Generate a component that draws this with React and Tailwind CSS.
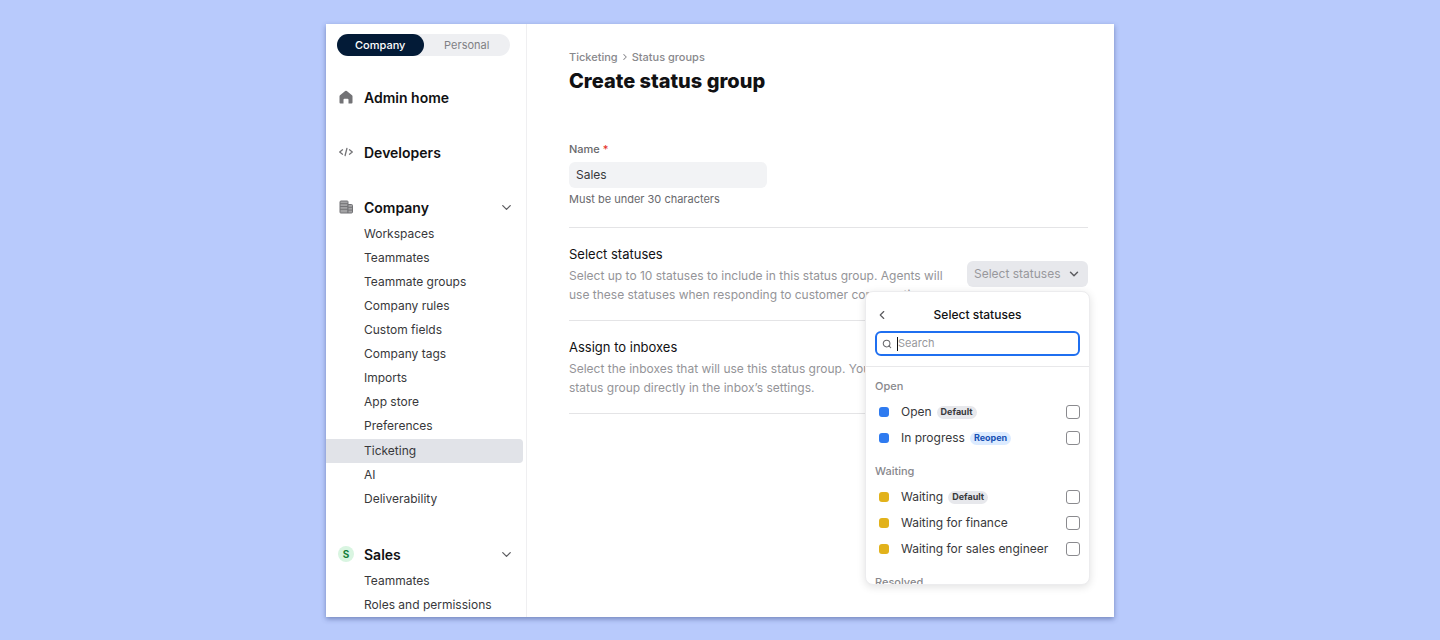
import { useState } from "react";
import { ChevronDown, ChevronLeft, ChevronRight, Search } from "lucide-react";
import clsx from "clsx";

const COMPANY_LINKS = [
  "Workspaces",
  "Teammates",
  "Teammate groups",
  "Company rules",
  "Custom fields",
  "Company tags",
  "Imports",
  "App store",
  "Preferences",
  "Ticketing",
  "AI",
  "Deliverability",
];

const SALES_LINKS = ["Teammates", "Roles and permissions"];

const STATUS_GROUPS = [
  {
    label: "Open",
    color: "bg-[#2f7bf0]",
    items: [
      { name: "Open", badge: "Default" },
      { name: "In progress", badge: "Reopen" },
    ],
  },
  {
    label: "Waiting",
    color: "bg-[#e2b21b]",
    items: [
      { name: "Waiting", badge: "Default" },
      { name: "Waiting for finance" },
      { name: "Waiting for sales engineer" },
    ],
  },
  { label: "Resolved", color: "bg-[#2f9e5b]", items: [] },
];

function HomeIcon() {
  return (
    <svg viewBox="0 0 14 14" className="size-[14px]" fill="#737376" aria-hidden="true">
      <path d="M6.2 1 1 5.2Q.5 5.6.5 6.3v6.2q0 1 1 1h3V9.8a1 1 0 0 1 1-1h3a1 1 0 0 1 1 1v3.7h3q1 0 1-1V6.3q0-.7-.5-1.1L7.8 1Q7 .4 6.2 1Z" />
    </svg>
  );
}

function CodeIcon() {
  return (
    <svg viewBox="0 0 16 12" className="h-3 w-4" fill="none" stroke="#737376" strokeWidth="1.3" strokeLinecap="round" strokeLinejoin="round" aria-hidden="true">
      <path d="M4.5 3.8 1.7 6l2.800 2.200M11.500 3.800 14.300 6l-2.800 2.200M8.900 2.500 7.100 9.500" />
    </svg>
  );
}

function BuildingIcon() {
  return (
    <svg viewBox="0 0 14 14" className="size-[14px]" aria-hidden="true">
      <path d="M2 1h6.300q.7 0 .7.7V13H1.700Q1 13 1 12.300V2q0-1 1-1Z" fill="#a3a3a5" stroke="#737376" />
      <path d="M9 4.500h3.500q1 0 1 1v6.500q0 1-1 1H9Z" fill="#a3a3a5" stroke="#737376" />
      <path d="M1 3.700h8M1 6.500h8M1 9.300h8M9 7.300h4.500M9 10.100h4.500" stroke="#737376" />
    </svg>
  );
}

function NavHeading({ icon, children, expandable }) {
  const inner = (
    <>
      <span className="flex w-4 shrink-0 justify-center">{icon}</span>
      <span className="flex-1 text-left">{children}</span>
      {expandable && <ChevronDown size={15} strokeWidth={2} className="text-[#5c5c60]" aria-hidden="true" />}
    </>
  );
  const cls = "flex h-6 w-full items-center gap-[10px] pl-3 pr-3 text-[14px] font-semibold text-[#111113]";
  return expandable ? (
    <button type="button" aria-expanded="true" className={cls}>{inner}</button>
  ) : (
    <a href="#" className={cls}>{inner}</a>
  );
}

function NavList({ links, active }) {
  return (
    <ul className="mt-[3px]">
      {links.map((link) => (
        <li key={link} className={clsx("mr-[3px]", link === active && "mt-px rounded-r bg-[#e1e3e8]")}>
          <a
            href="#"
            aria-current={link === active ? "page" : undefined}
            className="flex h-6 items-center pl-[38px] text-[12px] text-[#38383b]"
          >
            {link}
          </a>
        </li>
      ))}
    </ul>
  );
}

function Sidebar() {
  return (
    <aside className="w-[201px] shrink-0 border-r border-[#efeff1] pt-[10px]">
      <div className="ml-[11px] mr-4 flex h-[22px] rounded-full bg-[#eeeff2] text-[11px]">
        <button type="button" className="flex-1 rounded-full bg-[#031b37] font-medium text-white">Company</button>
        <button type="button" className="flex-1 text-[#808084]">Personal</button>
      </div>
      <nav className="mt-[29px] flex flex-col gap-[31px]">
        <NavHeading icon={<HomeIcon />}>Admin home</NavHeading>
        <NavHeading icon={<CodeIcon />}>Developers</NavHeading>
        <div>
          <NavHeading icon={<BuildingIcon />} expandable>Company</NavHeading>
          <NavList links={COMPANY_LINKS} active="Ticketing" />
        </div>
        <div>
          <NavHeading
            expandable
            icon={
              <span className="flex size-4 items-center justify-center rounded-full bg-[#d9f5e1] text-[10px] font-bold text-[#13803a]">S</span>
            }
          >
            Sales
          </NavHeading>
          <NavList links={SALES_LINKS} />
        </div>
      </nav>
    </aside>
  );
}

function Badge({ children }) {
  return (
    <span
      className={clsx(
        "flex h-[13px] items-center rounded-full px-1 text-[9px] font-bold",
        children === "Reopen" ? "bg-[#dcebff] text-[#1650b5]" : "bg-[#e7e8ec] text-[#38383b]"
      )}
    >
      {children}
    </span>
  );
}

function StatusMenu() {
  return (
    <div className="absolute -right-0.5 top-full z-10 mt-1 h-[294px] w-[225px] overflow-hidden rounded-lg border border-[#ececee] bg-white shadow-[0_2px_8px_rgba(0,0,0,0.12)]">
      <div className="border-b border-[#e8e8ea] px-[9px] pb-[10px] pt-[11px]">
        <div className="flex h-6 items-center">
          <button type="button" aria-label="Back" className="w-4 text-[#5c5c60]">
            <ChevronLeft size={14} strokeWidth={2} />
          </button>
          <h3 className="flex-1 pr-4 text-center text-[12px] font-medium text-[#111113]">Select statuses</h3>
        </div>
        <label className="mt-1 flex h-[25px] items-center rounded-md border-2 border-[#1f6ff0] pl-[5px] text-[11px]">
          <Search size={10} strokeWidth={2.5} className="text-[#68686c]" aria-hidden="true" />
          <span className="ml-[5px] h-[14px] w-px bg-[#111113]" />
          <input
            type="text"
            aria-label="Search statuses"
            placeholder="Search"
            className="min-w-0 flex-1 bg-transparent outline-none placeholder:text-[#98989c]"
          />
        </label>
      </div>

      <div className="flex flex-col gap-3 px-[9px] pt-[11px]">
        {STATUS_GROUPS.map((group) => (
          <section key={group.label}>
            <h4 className="mb-[5px] text-[11px] leading-4 font-medium text-[#88888c]">{group.label}</h4>
            {group.items.map((item) => (
              <label key={item.name} className="flex h-[26px] items-center pl-1 text-[12px] text-[#38383b]">
                <span className={clsx("mr-3 size-[10px] rounded-[3px]", group.color)} />
                <span className="mr-[5px]">{item.name}</span>
                {item.badge && <Badge>{item.badge}</Badge>}
                <input
                  type="checkbox"
                  className="ml-auto size-[14px] appearance-none rounded-[3px] border border-[#8a8a8e] bg-white checked:bg-[#1f6ff0]"
                />
              </label>
            ))}
          </section>
        ))}
      </div>
    </div>
  );
}

function SettingRow({ title, description, children }) {
  return (
    <section className="flex items-center justify-between border-t border-[#e4e4e6] py-4">
      <div className="max-w-[375px]">
        <h2 className="text-[13px] leading-5 text-[#111113]">{title}</h2>
        <p className="mt-0.5 text-[12px] leading-[19px] text-[#949498]">{description}</p>
      </div>
      {children}
    </section>
  );
}

export default function App() {
  const [name, setName] = useState("Sales");

  return (
    <div className="min-h-screen bg-[#b8cafc] px-6 pb-5 pt-6 font-['Inter',sans-serif]">
      <div className="mx-auto flex max-w-[788px] bg-white shadow-[0_2px_5px_rgba(30,50,110,0.45)]">
        <Sidebar />

        <main className="min-w-0 flex-1 pl-[42px] pr-[26px] pt-[25px]">
          <nav className="flex items-center gap-0.5 text-[11px] leading-4 font-medium text-[#88888c]">
            <a href="#">Ticketing</a>
            <ChevronRight size={10} strokeWidth={2.5} aria-hidden="true" />
            <a href="#">Status groups</a>
          </nav>
          <h1 className="mt-1 text-[20px] leading-6 font-extrabold text-[#111113]">Create status group</h1>

          <div className="mb-5 mt-12">
            <label htmlFor="group-name" className="block text-[11px] leading-4 font-medium text-[#68686c]">
              Name <span className="text-[#e5342b]">*</span>
            </label>
            <input
              id="group-name"
              type="text"
              value={name}
              onChange={(e) => setName(e.target.value)}
              className="mt-[5px] block h-[26px] w-[198px] rounded-md bg-[#f2f3f5] px-[7px] pb-0.5 text-[12px] text-[#38383b] outline-none"
            />
            <p className="mt-[3px] text-[11px] leading-4 text-[#68686c]">Must be under 30 characters</p>
          </div>

          <div className="border-b border-[#e4e4e6]">
            <SettingRow
              title="Select statuses"
              description="Select up to 10 statuses to include in this status group. Agents will use these statuses when responding to customer conversations."
            >
              <div className="relative shrink-0">
                <button
                  type="button"
                  aria-expanded="true"
                  className="flex h-[26px] w-[121px] items-center justify-between rounded-md bg-[#e7e8ec] px-[7px] text-[12px] text-[#98989c]"
                >
                  Select statuses
                  <ChevronDown size={14} strokeWidth={2.5} className="text-[#5c5c60]" aria-hidden="true" />
                </button>
                <StatusMenu />
              </div>
            </SettingRow>
            <SettingRow
              title="Assign to inboxes"
              description="Select the inboxes that will use this status group. You can set the status group directly in the inbox’s settings."
            />
          </div>
        </main>
      </div>
    </div>
  );
}
